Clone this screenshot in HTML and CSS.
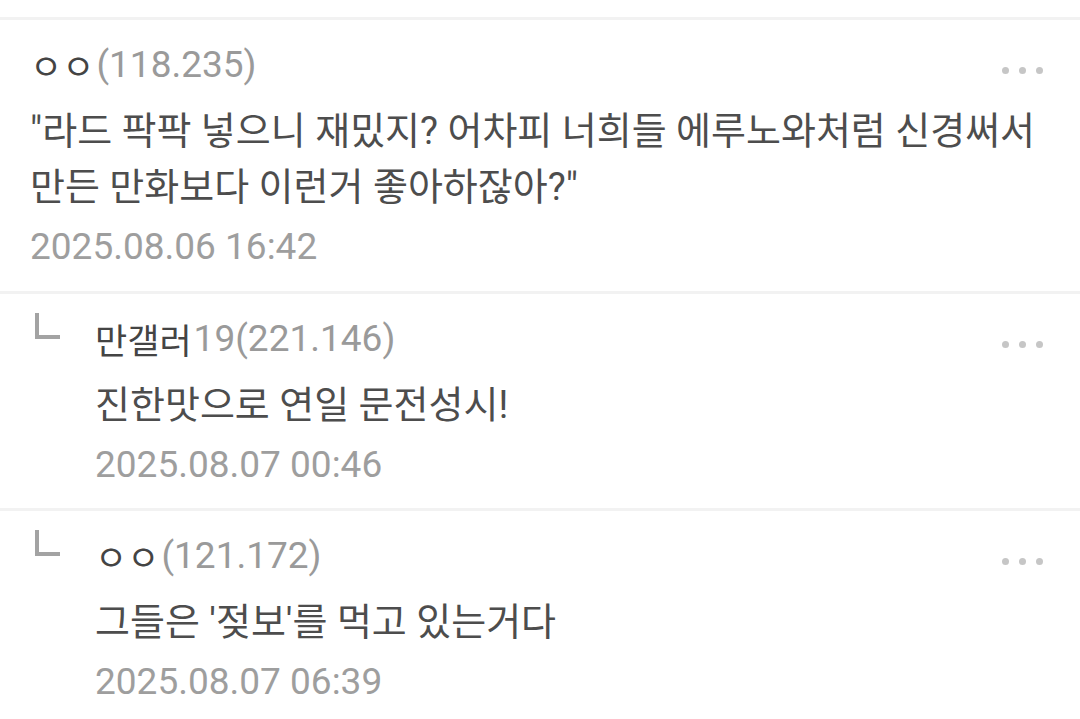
FILE: index.html
```html
<!DOCTYPE html>
<html lang="ko">
<head>
    <meta charset="UTF-8">
    <meta name="viewport" content="width=device-width, initial-scale=1.0">
    <title>댓글</title>
    <link rel="stylesheet" href="styles.css">
</head>
<body>

<div class="comments">
    <div class="divider"></div>

    <div class="comment">
        <div class="content">
            <div class="head">
                <span class="name">ㅇㅇ</span><span class="ip">(118.235)</span>
                <span class="more"><i></i><i></i><i></i></span>
            </div>
            <div class="text">"라드 팍팍 넣으니 재밌지? 어차피 너희들 에루노와처럼 신경써서 만든 만화보다 이런거 좋아하잖아?"</div>
            <div class="date">2025.08.06 16:42</div>
        </div>
    </div>

    <div class="divider"></div>

    <div class="comment reply">
        <div class="mark"></div>
        <div class="content">
            <div class="head">
                <span class="name">만갤러</span><span class="ip">19(221.146)</span>
                <span class="more"><i></i><i></i><i></i></span>
            </div>
            <div class="text">진한맛으로 연일 문전성시!</div>
            <div class="date">2025.08.07 00:46</div>
        </div>
    </div>

    <div class="divider"></div>

    <div class="comment reply">
        <div class="mark"></div>
        <div class="content">
            <div class="head">
                <span class="name">ㅇㅇ</span><span class="ip">(121.172)</span>
                <span class="more"><i></i><i></i><i></i></span>
            </div>
            <div class="text">그들은 '젖보'를 먹고 있는거다</div>
            <div class="date">2025.08.07 06:39</div>
        </div>
    </div>
</div>

</body>
</html>
```

FILE: styles.css
```css
body {
    margin: 0;
    background-color: #fff;
    font-family: Roboto, "Noto Sans CJK KR", sans-serif;
}
.comments {
    padding-top: 17px;
}
.divider {
    height: 3px;
    background-color: #f2f2f2;
}
.comment {
    display: flex;
    padding: 19px 37px 19px 30px;
}
.reply {
    padding-left: 35px;
    padding-bottom: 18px;
}
.mark {
    width: 21px;
    height: 22px;
    border-left: 4px solid #a3a3a3;
    border-bottom: 4px solid #a3a3a3;
    margin-right: 35px;
    flex-shrink: 0;
}
.content {
    flex: 1;
    min-width: 0;
}
.head {
    display: flex;
    align-items: center;
    height: 50px;
}
.name {
    font-size: 35px;
    color: #444;
}
.ip {
    font-size: 37px;
    color: #9a9a9a;
    margin-left: 2px;
}
.more {
    margin-left: auto;
    margin-top: 12px;
    display: flex;
    gap: 10px;
}
.more i {
    width: 7px;
    height: 7px;
    border-radius: 50%;
    background-color: #c6c6c6;
}
.text {
    margin-top: 14px;
    font-size: 38px;
    line-height: 56px;
    color: #4d4d4d;
    word-break: keep-all;
}
.date {
    margin-top: 7px;
    font-size: 37px;
    line-height: 50px;
    color: #9e9e9e;
}
```
